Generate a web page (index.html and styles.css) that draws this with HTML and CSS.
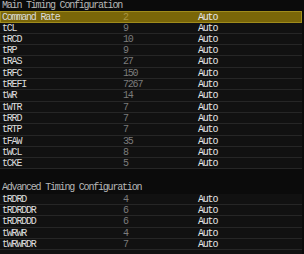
FILE: index.html
```html
<!DOCTYPE html>
<html lang="en">
<head>
    <meta charset="UTF-8">
    <title>Timing Configuration</title>
    <link rel="stylesheet" href="styles.css">
</head>
<body>

<div class="panel">
    <div class="title">Main Timing Configuration</div>
    <div class="row active"><span>Command Rate</span><span class="val">2</span><span class="mode">Auto</span></div>
    <div class="row"><span>tCL</span><span class="val">9</span><span class="mode">Auto</span></div>
    <div class="row"><span>tRCD</span><span class="val">10</span><span class="mode">Auto</span></div>
    <div class="row"><span>tRP</span><span class="val">9</span><span class="mode">Auto</span></div>
    <div class="row"><span>tRAS</span><span class="val">27</span><span class="mode">Auto</span></div>
    <div class="row"><span>tRFC</span><span class="val">150</span><span class="mode">Auto</span></div>
    <div class="row"><span>tREFI</span><span class="val">7267</span><span class="mode">Auto</span></div>
    <div class="row"><span>tWR</span><span class="val">14</span><span class="mode">Auto</span></div>
    <div class="row"><span>tWTR</span><span class="val">7</span><span class="mode">Auto</span></div>
    <div class="row"><span>tRRD</span><span class="val">7</span><span class="mode">Auto</span></div>
    <div class="row"><span>tRTP</span><span class="val">7</span><span class="mode">Auto</span></div>
    <div class="row"><span>tFAW</span><span class="val">35</span><span class="mode">Auto</span></div>
    <div class="row"><span>tWCL</span><span class="val">8</span><span class="mode">Auto</span></div>
    <div class="row"><span>tCKE</span><span class="val">5</span><span class="mode">Auto</span></div>

    <div class="title spaced">Advanced Timing Configuration</div>
    <div class="row"><span>tRDRD</span><span class="val">4</span><span class="mode">Auto</span></div>
    <div class="row"><span>tRDRDDR</span><span class="val">6</span><span class="mode">Auto</span></div>
    <div class="row"><span>tRDRDDD</span><span class="val">6</span><span class="mode">Auto</span></div>
    <div class="row"><span>tWRWR</span><span class="val">4</span><span class="mode">Auto</span></div>
    <div class="row"><span>tWRWRDR</span><span class="val">7</span><span class="mode">Auto</span></div>
    <div class="row"></div>
</div>

</body>
</html>
```

FILE: styles.css
```css
body {
    margin: 0;
    background-color: #0b0b0b;
    font-family: "Liberation Mono", monospace;
    font-size: 10px;
    letter-spacing: -1.2px;
    color: #dcdcdc;
    overflow: hidden;
}
.panel {
    width: 302px;
}
.title {
    height: 11.3px;
    line-height: 11.3px;
    padding-left: 2px;
    color: #b8b8b8;
}
.title.spaced {
    margin-top: 13px;
}
.row {
    display: grid;
    grid-template-columns: 121px 75px 1fr;
    height: 11.3px;
    line-height: 11px;
    box-sizing: border-box;
    padding-left: 2px;
    background-color: #111111;
    border-bottom: 1px solid #262626;
}
.val {
    color: #7c7c7c;
}
.mode {
    color: #e6e6e6;
}
.row.active {
    background-color: #7a6608;
    border: 1px solid #a08c1c;
    padding-left: 1px;
}
.row.active .val {
    color: #a89440;
}
```
